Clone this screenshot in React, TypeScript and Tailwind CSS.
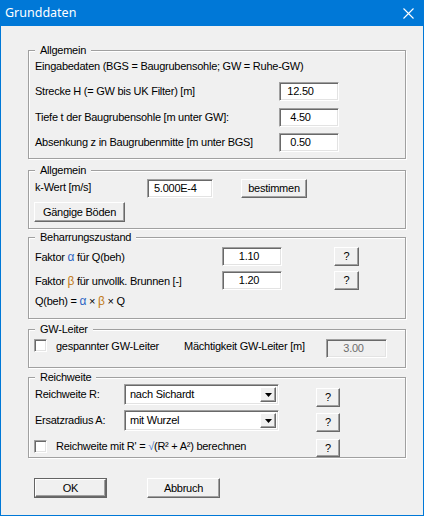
import React from 'react';

const raised =
  'border border-t-white border-l-white border-r-[#696969] border-b-[#696969] shadow-[inset_-1px_-1px_0_#a0a0a0] bg-[#f0f0f0]';
const sunken =
  'border border-t-[#a0a0a0] border-l-[#a0a0a0] border-r-white border-b-white shadow-[inset_1px_1px_0_#696969,inset_-1px_-1px_0_#e3e3e3]';

const Group = ({ title, className, children }: { title: string; className: string; children: React.ReactNode }) => (
  <div
    className={`ml-[27px] w-[378px] border border-[#a0a0a0] shadow-[inset_1px_1px_0_#fff,1px_1px_0_#fff] flex flex-col ${className}`}
  >
    <span className="-mt-[7px] ml-[6px] px-[5px] w-fit bg-[#f0f0f0] leading-[13px]">{title}</span>
    {children}
  </div>
);

const Btn = ({ label, className }: { label: string; className: string }) => (
  <div className={`${raised} flex items-center justify-center leading-[13px] ${className}`}>{label}</div>
);

const Field = ({ value, className }: { value: string; className: string }) => (
  <div className={`${sunken} bg-white flex items-center leading-[13px] ${className}`}>{value}</div>
);

const Check = ({ className }: { className?: string }) => (
  <div className={`${sunken} bg-white w-[13px] h-[13px] shrink-0 ${className ?? ''}`} />
);

const Combo = ({ value }: { value: string }) => (
  <div className={`${sunken} bg-white w-[155px] h-[21px] flex items-center p-[2px]`}>
    <span className="flex-1 pl-[3px] leading-[13px]">{value}</span>
    <div className={`${raised} w-[16px] h-full flex items-center justify-center`}>
      <svg width="7" height="4" viewBox="0 0 7 4">
        <path d="M0 0h7L3.5 4z" fill="#000" />
      </svg>
    </div>
  </div>
);

const Alpha = () => <span className="text-[12px] text-[#2f66c4]">α</span>;
const Beta = () => <span className="text-[12px] text-[#c07a20]">β</span>;

export default function App() {
  return (
    <div
      className="w-[424px] h-[516px] bg-[#0078d7] px-[1px] pb-[1px] flex flex-col text-[11px] tracking-[-0.25px] text-black"
      style={{ fontFamily: '"Liberation Sans", Arial, sans-serif' }}
    >
      <div className="h-[26px] flex items-center justify-between pl-[4px] pr-[9px] text-white">
        <span
          className="text-[12.5px] tracking-normal"
          style={{ fontFamily: '"Noto Sans", "Open Sans", sans-serif' }}
        >
          Grunddaten
        </span>
        <svg width="11" height="11" viewBox="0 0 11 11">
          <path d="M0.5 0.5L10.5 10.5M10.5 0.5L0.5 10.5" stroke="#fff" strokeWidth="1.1" />
        </svg>
      </div>

      <div className="flex-1 bg-[#f0f0f0] flex flex-col">
        {/* Allgemein */}
        <Group title="Allgemein" className="mt-[24px] h-[109px]">
          <div className="pl-[6px] mt-[3px] leading-[13px]">Eingabedaten (BGS = Baugrubensohle; GW = Ruhe-GW)</div>
          <div className="pl-[6px] mt-[9px] flex items-center">
            <span className="w-[244px]">Strecke H (= GW bis UK Filter) [m]</span>
            <Field value="12.50" className="w-[60px] h-[19px] justify-center pr-[17px]" />
          </div>
          <div className="pl-[6px] mt-[7px] flex items-center">
            <span className="w-[244px]">Tiefe t der Baugrubensohle [m unter GW]:</span>
            <Field value="4.50" className="w-[60px] h-[19px] justify-center pr-[17px]" />
          </div>
          <div className="pl-[6px] mt-[6px] flex items-center">
            <span className="w-[244px]">Absenkung z in Baugrubenmitte [m unter BGS]</span>
            <Field value="0.50" className="w-[60px] h-[19px] justify-center pr-[17px]" />
          </div>
        </Group>

        {/* Allgemein k-Wert */}
        <Group title="Allgemein" className="mt-[11px] h-[59px]">
          <div className="pl-[6px] mt-[2px] flex items-center">
            <span className="w-[112px] -mt-[2px]">k-Wert [m/s]</span>
            <Field value="5.000E-4" className="w-[66px] h-[19px] pl-[6px]" />
            <Btn label="bestimmen" className="ml-[28px] w-[66px] h-[19px]" />
          </div>
          <Btn label="Gängige Böden" className="ml-[5px] mt-[4px] w-[91px] h-[20px]" />
        </Group>

        {/* Beharrungszustand */}
        <Group title="Beharrungszustand" className="mt-[8px] h-[82px]">
          <div className="pl-[6px] mt-[3px] flex items-center">
            <span className="w-[187px]">
              Faktor <Alpha /> für Q(beh)
            </span>
            <Field value="1.10" className="w-[60px] h-[19px] justify-center pr-[6px]" />
            <Btn label="?" className="ml-[52px] w-[25px] h-[19px]" />
          </div>
          <div className="pl-[6px] mt-[5px] flex items-center">
            <span className="w-[187px]">
              Faktor <Beta /> für unvollk. Brunnen [-]
            </span>
            <Field value="1.20" className="w-[60px] h-[19px] justify-center pr-[6px]" />
            <Btn label="?" className="ml-[52px] w-[25px] h-[19px]" />
          </div>
          <div className="pl-[6px] mt-[5px] leading-[13px]">
            Q(beh) = <Alpha /> × <Beta /> × Q
          </div>
        </Group>

        {/* GW-Leiter */}
        <Group title="GW-Leiter" className="mt-[10px] h-[39px]">
          <div className="pl-[5px] mt-[3px] flex items-start">
            <Check />
            <span className="ml-[9px] mt-[1px] w-[128px] leading-[13px]">gespannter GW-Leiter</span>
            <span className="mt-[1px] w-[142px] leading-[13px]">Mächtigkeit GW-Leiter [m]</span>
            <div
              className={`${sunken} bg-[#f0f0f0] w-[61px] h-[19px] flex items-center justify-center pr-[6px] text-[#6d6d6d] leading-[13px]`}
            >
              3.00
            </div>
          </div>
        </Group>

        {/* Reichweite */}
        <Group title="Reichweite" className="mt-[9px] h-[81px]">
          <div className="pl-[6px] flex items-start">
            <span className="w-[89px] mt-[4px] leading-[13px]">Reichweite R:</span>
            <Combo value="nach Sichardt" />
            <Btn label="?" className="ml-[37px] mt-[4px] w-[24px] h-[19px]" />
          </div>
          <div className="pl-[6px] mt-[3px] flex items-start">
            <span className="w-[89px] mt-[4px] leading-[13px]">Ersatzradius A:</span>
            <Combo value="mit Wurzel" />
            <Btn label="?" className="ml-[37px] mt-[3px] w-[24px] h-[19px]" />
          </div>
          <div className="pl-[5px] mt-[7px] flex items-start">
            <Check className="mt-[1px]" />
            <span className="ml-[9px] mt-[1px] w-[260px] leading-[13px]">
              Reichweite mit R' = <span className="text-[#3a72c8]">√</span>(R² + A²) berechnen
            </span>
            <Btn label="?" className="w-[24px] h-[18px]" />
          </div>
        </Group>

        <div className="mt-[20px] ml-[33px] flex">
          <div className="border border-[#646464] w-[73px] h-[20px] flex">
            <Btn label="OK" className="flex-1" />
          </div>
          <Btn label="Abbruch" className="ml-[40px] w-[73px] h-[20px]" />
        </div>
      </div>
    </div>
  );
}
